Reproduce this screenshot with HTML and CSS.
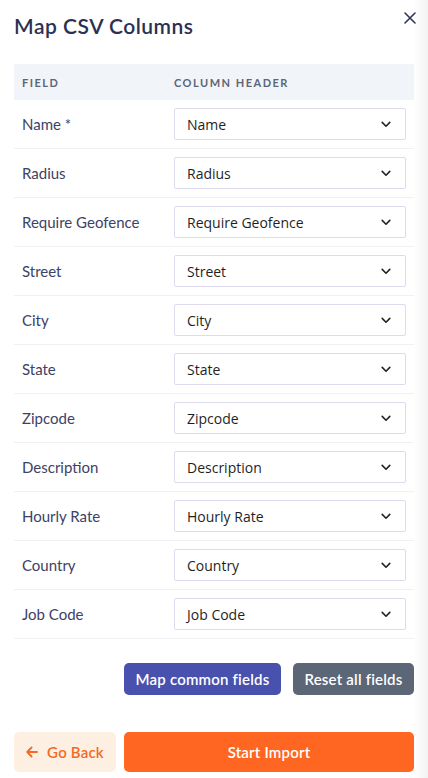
FILE: index.html
```html
<!DOCTYPE html>
<html lang="en">
<head>
  <meta charset="UTF-8">
  <meta name="viewport" content="width=device-width, initial-scale=1.0">
  <title>Map CSV Columns</title>
  <link rel="stylesheet" href="styles.css">
</head>
<body>
  <div class="modal">
    <div class="modal-head">
      <h2>Map CSV Columns</h2>
      <button class="close-btn" aria-label="Close">
        <svg width="14" height="14" viewBox="0 0 14 14"><path d="M2 2L12 12M12 2L2 12" stroke="#2f3558" stroke-width="1.6" stroke-linecap="round"/></svg>
      </button>
    </div>

    <div class="map-table">
      <div class="table-head">
        <div class="col-field">Field</div>
        <div class="col-header">Column Header</div>
      </div>
      <div id="rows"></div>
    </div>

    <div class="actions">
      <button class="btn btn-map">Map common fields</button>
      <button class="btn btn-reset">Reset all fields</button>
    </div>

    <div class="footer">
      <button class="btn btn-back">
        <svg width="12" height="12" viewBox="0 0 12 12"><path d="M11 6H1.5M5.6 1.5L1.2 6L5.6 10.5" fill="none" stroke="#f26a25" stroke-width="1.8" stroke-linecap="round" stroke-linejoin="round"/></svg>
        Go Back
      </button>
      <button class="btn btn-import">Start Import</button>
    </div>
  </div>

  <script>
    const fields = [
      "Name *", "Radius", "Require Geofence", "Street", "City", "State",
      "Zipcode", "Description", "Hourly Rate", "Country", "Job Code"
    ];

    const rows = document.getElementById("rows");
    fields.forEach(function (field) {
      const value = field.replace(" *", "");
      rows.innerHTML += `
        <div class="map-row">
          <div class="col-field">${field}</div>
          <div class="col-header">
            <div class="select-box">
              <span>${value}</span>
              <svg width="10" height="7" viewBox="0 0 10 7"><path d="M1.2 1.4L5 5.2L8.8 1.4" fill="none" stroke="#222" stroke-width="1.6" stroke-linecap="round" stroke-linejoin="round"/></svg>
            </div>
          </div>
        </div>
      `;
    });
  </script>
</body>
</html>
```

FILE: styles.css
```css
body {
  margin: 0;
  padding: 0;
  font-family: Lato, "Noto Sans", sans-serif;
  background: linear-gradient(to right, #fff 414px, #f2f2f2 428px);
  height: 778px;
  overflow: hidden;
}

.modal {
  width: 400px;
  padding: 0 14px;
}

.modal-head {
  display: flex;
  justify-content: space-between;
  align-items: flex-start;
  height: 64px;
}

.modal-head h2 {
  margin: 13px 0 0;
  font-size: 21px;
  font-weight: 600;
  color: #2c3152;
  letter-spacing: 0.5px;
}

.close-btn {
  background: none;
  border: none;
  padding: 0;
  margin: 11px -3px 0 0;
  width: 14px;
  height: 14px;
  cursor: pointer;
}

.table-head {
  display: flex;
  align-items: center;
  height: 36px;
  background-color: #f1f4f8;
  font-size: 11px;
  font-weight: 700;
  letter-spacing: 1.5px;
  text-transform: uppercase;
  color: #5c6677;
}

.col-field {
  width: 152px;
  padding-left: 8px;
}

.col-header {
  flex: 1;
  padding-right: 8px;
}

.map-row {
  display: flex;
  align-items: center;
  height: 48px;
  border-bottom: 1px solid #f0f1f4;
  font-size: 15px;
  color: #3d4266;
}

.select-box {
  display: flex;
  justify-content: space-between;
  align-items: center;
  height: 30px;
  padding: 0 14px 0 12px;
  border: 1px solid #dedbee;
  border-radius: 2px;
  font-family: "Open Sans", "Noto Sans", sans-serif;
  font-size: 14px;
  color: #1f1f1f;
}

.actions {
  display: flex;
  justify-content: flex-end;
  gap: 12px;
  margin-top: 24px;
}

.btn {
  border: none;
  border-radius: 5px;
  font-family: Lato, "Noto Sans", sans-serif;
  font-size: 15px;
  font-weight: 600;
  letter-spacing: 0.2px;
  cursor: pointer;
}

.btn-map,
.btn-reset {
  height: 32px;
  color: #fff;
}

.btn-map {
  width: 157px;
  background-color: #4951ae;
}

.btn-reset {
  width: 121px;
  background-color: #5b6677;
}

.footer {
  display: flex;
  gap: 8px;
  margin-top: 37px;
}

.btn-back,
.btn-import {
  height: 40px;
}

.btn-back {
  width: 102px;
  display: flex;
  align-items: center;
  justify-content: center;
  gap: 9px;
  background-color: #fdf0e3;
  color: #f26a25;
}

.btn-import {
  flex: 1;
  background-color: #ff6621;
  color: #fff;
}
```
